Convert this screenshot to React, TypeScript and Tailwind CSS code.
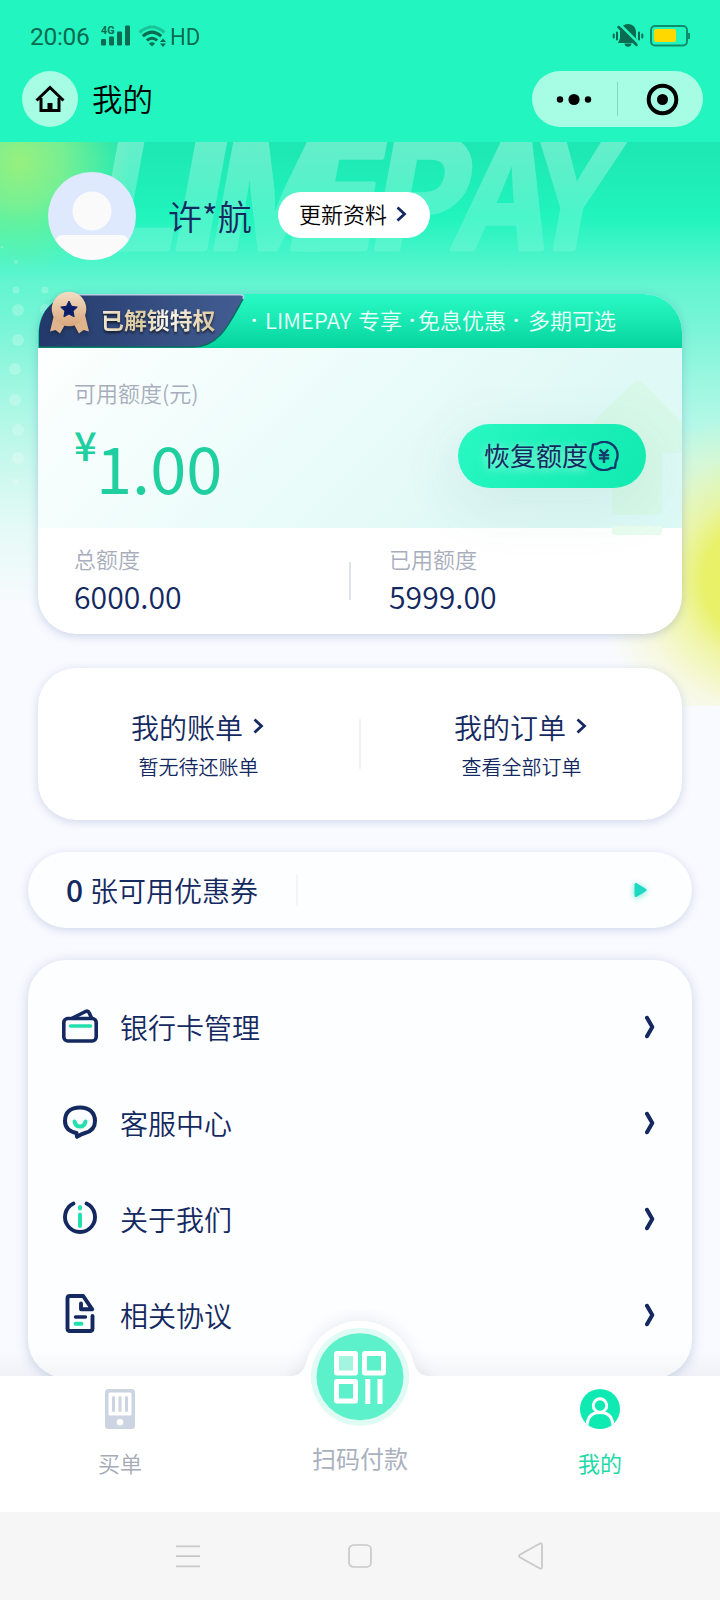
import React from 'react';
import clsx from 'clsx';

const NAVY = '#14295f';
const MINT = '#25dfae';

const dots = [
  { x: 2, y: 105, r: 1.5 },
  { x: 16, y: 120, r: 2 },
  { x: 16, y: 148, r: 3.5 },
  { x: 45, y: 148, r: 3.5 },
  { x: 18, y: 168, r: 6 },
  { x: 46, y: 168, r: 6 },
  { x: 18, y: 198, r: 6 },
  { x: 15, y: 227, r: 6 },
  { x: 15, y: 258, r: 6 },
  { x: 18, y: 288, r: 6 },
  { x: 18, y: 316, r: 6 },
  { x: 16, y: 340, r: 3 },
];

// letters of the watermark, E shares its stem with the M
const watermark = [
  { ch: 'L', x: 91, w: 82 },
  { ch: 'I', x: 167, w: 49 },
  { ch: 'M', x: 207, w: 122 },
  { ch: 'E', x: 283, w: 90 },
  { ch: 'P', x: 367, w: 94 },
  { ch: 'A', x: 449, w: 96 },
  { ch: 'Y', x: 518, w: 92 },
];

const StatusBar: React.FC = () => (
  <div className="flex h-[71px] items-center justify-between pl-[30px] pr-[30px] font-['Roboto',sans-serif] text-[#0a6b50]">
    <div className="flex h-[28px] items-center">
      <span className="mt-[2px] w-[62px] text-[24.5px] font-[430] leading-7 tracking-[-0.3px]">20:06</span>
      <svg className="ml-[9px]" width="29" height="21" viewBox="0 0 29 21" fill="currentColor">
        <text x="0" y="8.6" fontSize="11" fontWeight="700" textLength="13.5" lengthAdjust="spacingAndGlyphs">4G</text>
        <rect x="0" y="14" width="5" height="6.500" rx="1.2" />
        <rect x="8" y="11.500" width="5" height="9" rx="1.2" />
        <rect x="16" y="6.500" width="5" height="14" rx="1.2" />
        <rect x="24" y="0.5" width="5" height="20" rx="1.2" />
      </svg>
      <svg className="ml-2" width="29" height="24" viewBox="0 0 29 24" fill="none" stroke="currentColor" strokeWidth="3">
        <path d="M1.500 8.500Q14 -2.5 26.500 8.500" opacity=".35" />
        <path d="M4.800 12.200Q14 4 23.200 12.200" />
        <path d="M8.800 16.400Q14 12 19.200 16.400" />
        <path d="M11 19.500Q14 17 17 19.500L14 22.500Z" fill="currentColor" stroke="none" />
        <path d="M25 14.500l3 3.500h-6zM25 23l3-3.500h-6z" fill="currentColor" stroke="none" />
      </svg>
      <span className="ml-[3px] mt-[2px] origin-left scale-x-90 text-[24.5px] font-[430] leading-7">HD</span>
    </div>
    <div className="flex items-center gap-[6px]">
      <svg width="32" height="25" viewBox="0 0 32 25" fill="currentColor">
        <path d="M16 1c5.200 0 8 3.700 8 8v6l2.500 5H6l2-4.500V9c0-4.300 2.800-8 8-8z" />
        <path d="M12.500 20.500h7c0 2-1.500 3.300-3.500 3.300s-3.500-1.300-3.500-3.300z" />
        <path d="M8.500 2L27 20.500" stroke="#22f5c0" strokeWidth="2.500" />
        <path d="M6.500 4L24.500 22" stroke="currentColor" strokeWidth="2.500" strokeLinecap="round" />
        <path d="M1.700 11.500v3M5 9.500v7M27 9.500v7M30.300 11.500v3" stroke="currentColor" strokeWidth="2" strokeLinecap="round" />
      </svg>
      <svg width="40" height="22" viewBox="0 0 40 22">
        <rect x="1" y="1" width="36" height="19.500" rx="4" fill="none" stroke="#0d8f6c" strokeWidth="2" />
        <path d="M38 8h1a1.500 1.500 0 0 1 0 6h-1z" fill="#0d8f6c" />
        <rect x="4" y="4" width="22" height="13" rx="2" fill="#ffd800" />
      </svg>
    </div>
  </div>
);

const NavBar: React.FC = () => (
  <div className="flex h-[71px] items-start justify-between pl-[21.500px] pr-[17px]">
    <div className="flex items-center">
      <div className="flex size-[56px] items-center justify-center rounded-full bg-[#a6fde4]">
        <svg width="30" height="28" viewBox="0 0 30 28" fill="none" stroke="#000" strokeWidth="3">
          <path d="M1.500 15.500L15 2.500l13.500 13" />
          <path d="M6 13v12.500h18V13" />
          <path d="M15 18v7" strokeWidth="5" />
        </svg>
      </div>
      <h1 className="-mt-[3px] ml-[14.500px] text-[30.500px] font-[350] leading-[52px] text-black">我的</h1>
    </div>
    <div className="flex h-[56px] w-[171px] items-center rounded-full bg-[#a6fde4]">
      <svg width="171" height="56" viewBox="0 0 171 56">
        <circle cx="28" cy="28.500" r="3.200" />
        <circle cx="42" cy="28.500" r="5.600" />
        <circle cx="56" cy="28.500" r="3.200" />
        <path d="M85.500 11v34" stroke="#7fd9c0" strokeWidth="1" />
        <circle cx="130.500" cy="28.500" r="13.800" fill="none" stroke="#000" strokeWidth="4" />
        <circle cx="130.500" cy="28.500" r="5.500" />
      </svg>
    </div>
  </div>
);

const Backdrop: React.FC = () => (
  <div className="absolute inset-x-0 top-0 h-[564px] overflow-hidden bg-[linear-gradient(180deg,#1de7b3_0px,#20efba_50px,#21f4be_75px,#62f5d0_140px,#7cf5d8_190px,#a2f7e2_250px,#c8f8ed_320px,#e6faf7_390px,#f9faff_470px)]">
    <div className="absolute -left-[90px] -top-[90px] size-[220px] rounded-full bg-[radial-gradient(closest-side,#97f07e,#8cf08acc_40%,#60f0a000)]" />
    <div className="absolute -right-[215px] top-[268px] size-[340px] rounded-full bg-[radial-gradient(closest-side,#e9f15a_0%,#e9f16a_36%,#ecf383b0_52%,#f1f6a050_76%,#f4f8c000)]" />
    <svg className="absolute inset-0" width="720" height="400" viewBox="0 0 720 400">
      <defs>
        <linearGradient id="fade" gradientUnits="userSpaceOnUse" x1="0" y1="0" x2="0" y2="110">
          <stop offset="0" stopColor="#fff" stopOpacity=".32" />
          <stop offset="1" stopColor="#fff" stopOpacity=".13" />
        </linearGradient>
        <mask id="word" maskUnits="userSpaceOnUse" x="0" y="0" width="720" height="120">
          <rect width="720" height="120" fill="url(#fade)" />
        </mask>
      </defs>
      <g mask="url(#word)">
        <g transform="translate(0 107) skewX(-10.500)" fill="#fff" stroke="#fff" strokeWidth="5" strokeLinejoin="round" fontFamily="Inter" fontWeight="700" fontSize="152">
          {watermark.map((l) => (
            <text key={l.ch} x={l.x} y="0" textLength={l.w} lengthAdjust="spacingAndGlyphs">{l.ch}</text>
          ))}
        </g>
      </g>
      {dots.map((dot) => (
        <circle key={`${dot.x}-${dot.y}`} cx={dot.x} cy={dot.y} r={dot.r} fill="#fff" opacity=".22" />
      ))}
    </svg>
  </div>
);

const SmallChevron: React.FC<{ className?: string }> = ({ className }) => (
  <svg className={className} width="11" height="16" viewBox="0 0 11 16" fill="none" stroke={NAVY} strokeWidth="2.800">
    <path d="M1.500 1.500L8.500 8l-7 6.500" />
  </svg>
);

const Profile: React.FC = () => (
  <div className="flex h-[148px] items-center pl-[48px]">
    <svg width="88" height="88" viewBox="0 0 88 88">
      <clipPath id="avatar"><circle cx="44" cy="44" r="44" /></clipPath>
      <g clipPath="url(#avatar)">
        <rect width="88" height="88" fill="#dee9fd" />
        <circle cx="44" cy="39" r="19.500" fill="#fafafa" />
        <rect x="7" y="63" width="74" height="40" rx="8" fill="#fafafa" />
      </g>
    </svg>
    <span className="-mt-[1px] ml-[32px] w-[84px] whitespace-nowrap text-[34px] font-[350] leading-[44px] text-[#14295f]">许*航</span>
    <button className="-mt-[2px] ml-[26px] flex h-[46px] w-[152px] items-center rounded-full bg-white pl-[21px] text-[22px] font-[350] text-black">
      <span className="-mt-[5px] leading-[40px]">更新资料</span>
      <SmallChevron className="mb-[3px] ml-[9px]" />
    </button>
  </div>
);

const Dot: React.FC<{ className: string }> = ({ className }) => (
  <span className={clsx("w-[6px] text-center font-['Noto_Sans',sans-serif] font-semibold", className)}>·</span>
);

const Ribbon: React.FC = () => (
  <div className="relative flex h-[54px] items-center rounded-tr-[38px] rounded-tl-[38px] bg-[linear-gradient(180deg,#29f9c4,#19e8b3_50%,#05d39d)]">
    <svg className="absolute -top-[6px] left-0 overflow-visible" width="210" height="60" viewBox="0 0 210 60">
      <defs>
        <linearGradient id="plate" x1="0" y1="0" x2="1" y2="0">
          <stop offset="0" stopColor="#22396a" />
          <stop offset="1" stopColor="#435d92" />
        </linearGradient>
        <linearGradient id="medal" x1="0" y1="0" x2="0" y2="1">
          <stop offset="0" stopColor="#f3ddc4" />
          <stop offset="1" stopColor="#d9a67a" />
        </linearGradient>
      </defs>
      <path d="M1 59V46C1 22 17 7 40 7H202q5 0 3 4C192 34 182 59 155 59z" fill="url(#plate)" />
      <path d="M40 6.800H202q5 0 3 4" fill="none" stroke="#b9cfe6" strokeWidth="1.600" />
      <path d="M1 59H155C182 59 192 34 205 11" fill="none" stroke="#0b6b62" strokeWidth="1.400" />
      <g style={{ filter: 'drop-shadow(0 2px 2px rgba(0,0,0,.3))' }}>
        <path d="M16 27L12 43.500l5.500-1.500 4.500 3.500L27 36.500h9l5 9 4.500-3.500 5.500 1.500L47 27z" fill="#e0b48c" />
        <circle cx="31" cy="21" r="17.300" fill="url(#medal)" />
      </g>
      <path d="M31 13l2.600 5.300 5.700.8-4.200 4 1 5.700L31 26l-5.100 2.800 1-5.700-4.200-4 5.700-.8z" fill="#0c1f66" stroke="#0c1f66" strokeWidth="1" strokeLinejoin="round" />
    </svg>
    <span className="relative -mt-[5px] ml-[63px] w-[116px] bg-[linear-gradient(100deg,#f6ecd6,#d9c79c_35%,#fbf8ee_55%,#d8c294)] bg-clip-text text-[22.900px] font-bold leading-[40px] text-transparent drop-shadow-[0_2px_1px_rgba(0,0,0,0.6)]">
      已解锁特权
    </span>
    <p className="-mt-[5px] ml-[34px] flex whitespace-nowrap text-[22px] font-[350] leading-[40px] text-[#eafff9]">
      <Dot className="ml-0" />
      <span className="ml-[8px] w-[93px] tracking-[0.1px]">LIMEPAY</span>
      <span>专享</span>
      <Dot className="ml-[7px]" />
      <span className="ml-[3px]">免息优惠</span>
      <Dot className="ml-[7px]" />
      <span className="ml-[9px]">多期可选</span>
    </p>
  </div>
);

const RestoreButton: React.FC = () => (
  <button className="relative flex h-[64px] w-[188px] items-center rounded-full bg-[linear-gradient(120deg,#2af8c3,#1bf0b9_50%,#12eab0)] pl-[26px] shadow-[0_14px_50px_14px_rgba(60,110,110,0.07)]">
    <span className="-mt-[2px] text-[26px] leading-[56px] text-[#14295f] [text-shadow:0_2px_10px_rgba(255,255,255,0.7)]">恢复额度</span>
    <svg className="ml-[1px]" width="30" height="30" viewBox="0 0 32 32" fill="none" stroke="#123a6b" strokeWidth="2.500">
      <path d="M8 3.500A14.300 14.300 0 0 1 28.500 22.500M24 28.500A14.300 14.300 0 0 1 3.500 9.500" />
      <path d="M8.500 3.200L4.200 3.600l-.7 5.900M23.500 28.800l4.300-.4.700-5.900" strokeLinejoin="round" />
      <path d="M11.500 9l4.500 5 4.500-5M10.500 15h11M10.500 18.500h11M16 14v9.500" />
    </svg>
  </button>
);

const CreditCard: React.FC = () => (
  <section className="relative mx-[38px] rounded-[38px] bg-white shadow-[0_2px_10px_rgba(60,90,160,0.25)]">
    <Ribbon />
    <div className="relative h-[180px] bg-[linear-gradient(135deg,#fdfffe_0%,#effdfb_35%,#dff9f6_75%,#dcf9f6_100%)] pl-[36px] pr-[36px] pt-[27px]">
      <svg className="absolute right-0 top-0" width="100" height="190" viewBox="0 0 100 190">
        <path d="M50 36q6-7 12 0L100 74v31H80v55q0 7-7 7H37q-7 0-7-7V95l-20-13q0-7 4-11z" fill="#d3f8e1" opacity=".6" />
        <rect x="30" y="178" width="50" height="9" rx="2" fill="#e8fdf0" />
      </svg>
      <div className="relative flex items-center justify-between">
        <div>
          <p className="h-[34px] text-[22px] font-[350] leading-[34px] text-[#a8adbc]">可用额度(元)</p>
          <p className="flex h-[100px] items-start text-[#20cfa0]">
            <span className="mt-[5px] w-[22px] text-[40px] font-medium leading-[60px]">¥</span>
            <span className="mt-[10px] text-[65px] leading-[94px]">1.00</span>
          </p>
        </div>
        <div className="mb-[-28px]"><RestoreButton /></div>
      </div>
    </div>
    <div className="flex h-[106px] rounded-b-[38px] pl-[36px] pt-[15px]">
      <div className="w-[275px]">
        <p className="text-[22px] font-[350] leading-[30px] text-[#a8adbc]">总额度</p>
        <p className="text-[30.200px] font-[350] leading-[46px] text-[#14295f]">6000.00</p>
      </div>
      <div className="mt-[19px] h-[38px] w-[2px] bg-[#dfe2ea]" />
      <div className="ml-[38px]">
        <p className="text-[22px] font-[350] leading-[30px] text-[#a8adbc]">已用额度</p>
        <p className="text-[30.200px] font-[350] leading-[46px] text-[#14295f]">5999.00</p>
      </div>
    </div>
  </section>
);

const ShortcutCell: React.FC<{ title: string; hint: string }> = ({ title, hint }) => (
  <div className="flex flex-1 flex-col items-center text-[#14295f]">
    <div className="mr-[2px] flex items-center text-[28px] font-[350] leading-[40px]">
      {title}
      <SmallChevron className="mb-[2px] ml-[10px]" />
    </div>
    <p className="text-[20px] font-[350] leading-[40px]">{hint}</p>
  </div>
);

const Shortcuts: React.FC = () => (
  <section className="mx-[38px] mt-[34px] flex h-[152px] rounded-[38px] bg-white pt-[39px] shadow-[0_2px_10px_rgba(60,90,160,0.22)]">
    <ShortcutCell title="我的账单" hint="暂无待还账单" />
    <div className="mt-[12px] h-[50px] w-[2px] bg-[#f0f1f5]" />
    <ShortcutCell title="我的订单" hint="查看全部订单" />
  </section>
);

const Coupons: React.FC = () => (
  <section className="mx-[28px] mt-[32px] flex h-[76px] items-center rounded-full bg-[#fdfeff] pl-[38px] pr-[44px] text-[#14295f] shadow-[0_2px_10px_rgba(60,90,160,0.22)]">
    <span className="-mt-[2px] text-[30px] font-medium leading-[60px]">0</span>
    <span className="ml-[7px] text-[28px] font-[350] leading-[60px]">张可用优惠券</span>
    <div className="ml-[38px] h-[32px] w-[2px] bg-[#f4f5f9]" />
    <svg className="ml-auto drop-shadow-[0_1px_3px_rgba(31,225,190,0.7)]" width="16" height="16" viewBox="0 0 16 16">
      <path d="M4 2.500v11l9-5.500z" fill="#1fd8c3" stroke="#1fd8c3" strokeWidth="3" strokeLinejoin="round" />
    </svg>
  </section>
);

const CardIcon = () => (
  <svg width="40" height="40" viewBox="0 0 40 40" fill="none" stroke={NAVY} strokeWidth="3.600" strokeLinecap="round" strokeLinejoin="round">
    <rect x="3.800" y="12.500" width="32.400" height="22.500" rx="4" />
    <path d="M12.500 12L25.500 5.500q2.600-1 3.800 1.600l2 4.400" />
    <path d="M10.500 20h20" stroke={MINT} />
  </svg>
);

const ServiceIcon = () => (
  <svg width="40" height="40" viewBox="0 0 40 40" fill="none" stroke={NAVY} strokeWidth="4" strokeLinecap="round" strokeLinejoin="round">
    <path d="M16.500 31C9 29.500 5 25.500 5 19 5 10 11 5.500 20 5.500S35 10.500 35 19c0 6.500-4 10.500-10 12-3 .7-5 2-8 3.800z" />
    <path d="M14.500 19.500q1 5 5.500 5t5.500-5" stroke={MINT} />
  </svg>
);

const AboutIcon = () => (
  <svg width="40" height="40" viewBox="0 0 40 40" fill="none" stroke={NAVY} strokeWidth="3.900" strokeLinecap="round">
    <path d="M13.500 5.500a15 15 0 1 0 13 0" />
    <path d="M20 9v1.500M20 16.500v11.500" stroke={MINT} strokeWidth="4" />
  </svg>
);

const AgreementIcon = () => (
  <svg width="40" height="40" viewBox="0 0 40 40" fill="none" stroke={NAVY} strokeWidth="3.900" strokeLinecap="round" strokeLinejoin="round">
    <path d="M32.500 22v12.500q0 2.500-2.500 2.500h-20q-2.500 0-2.500-2.500V4.500Q7.500 2 10 2h13.200l9 13.300H21V9.500" />
    <path d="M15.500 23h10" strokeWidth="3.400" />
    <path d="M15.500 29.800h6" stroke={MINT} />
  </svg>
);

const menu = [
  { label: '银行卡管理', icon: <CardIcon /> },
  { label: '客服中心', icon: <ServiceIcon /> },
  { label: '关于我们', icon: <AboutIcon /> },
  { label: '相关协议', icon: <AgreementIcon /> },
];

const MenuList: React.FC = () => (
  <section className="mx-[28px] mt-[32px] h-[418px] rounded-[38px] bg-[#fdfeff] pt-[18px] shadow-[0_2px_12px_rgba(60,90,160,0.25)]">
    {menu.map((item) => (
      <div key={item.label} className="flex h-[96px] items-center pl-[32px] pr-[37px]">
        {item.icon}
        <span className="ml-[20px] mt-[1px] text-[28px] font-[350] leading-[60px] text-[#14295f]">{item.label}</span>
        <svg className="ml-auto mt-[1px]" width="10" height="24" viewBox="0 0 10 24" fill="none" stroke={NAVY} strokeWidth="4" strokeLinecap="round" strokeLinejoin="round">
          <path d="M2 2.800l5.300 9.200L2 21.200" />
        </svg>
      </div>
    ))}
  </section>
);

const TabLabel: React.FC<{ text: string; active?: boolean }> = ({ text, active }) => (
  <span className={clsx('mt-[15px] text-[22px] leading-[36px]', active ? 'text-[#1fd9a8]' : 'font-[350] text-[#a5abb8]')}>{text}</span>
);

const TabBar: React.FC = () => (
  <nav className="relative flex h-[136px] bg-white">
    <div className="absolute inset-x-0 -top-[26px] h-[26px] bg-gradient-to-b from-transparent to-[#8088a014]" />
    {/* raised notch behind the scan button */}
    <svg className="absolute -top-[66px] left-[280px]" width="160" height="66" viewBox="0 0 160 66">
      <path d="M12 66c9-1 12-6 14.500-14.500a55.500 55.500 0 0 1 107 0c2.500 8.500 5.500 13.500 14.500 14.500v20H12z" fill="#fff" className="drop-shadow-[0_-3px_8px_rgba(100,110,140,0.12)]" />
    </svg>
    <svg className="absolute -top-[66px] left-[280px]" width="160" height="120" viewBox="0 0 160 120">
      <circle cx="80" cy="66.800" r="49" fill="#e0fbf4" />
      <circle cx="80" cy="66.800" r="43.500" fill="#5df1cb" />
      <g fill="none" stroke="#fff" strokeWidth="5">
        <rect x="56.500" y="43.500" width="19" height="19.500" fill="#a4f5df" rx=".5" />
        <rect x="84.500" y="43.500" width="19" height="19.500" rx=".5" />
        <rect x="56.500" y="71.500" width="19" height="19.500" rx=".5" />
        <path d="M87.800 69v25M100 69v25" />
      </g>
    </svg>
    <div className="flex flex-1 flex-col items-center pt-[13px]">
      <svg width="30" height="40" viewBox="0 0 30 40">
        <rect width="30" height="40" rx="3.500" fill="#cdd4e1" />
        <rect x="3.500" y="3.500" width="23" height="23" rx="1.500" fill="#fff" />
        <path d="M8.500 8.500v13M15 8.500v13M21.500 8.500v13" stroke="#cdd4e1" strokeWidth="3" strokeLinecap="round" />
        <circle cx="15" cy="33.200" r="3.300" fill="#fff" />
      </svg>
      <TabLabel text="买单" />
    </div>
    <div className="flex flex-1 flex-col items-center pt-[64px]">
      <span className="text-[24px] leading-[36px] text-[#a9b0be]">扫码付款</span>
    </div>
    <div className="flex flex-1 flex-col items-center pt-[13px]">
      <svg width="40" height="40" viewBox="0 0 40 40">
        <clipPath id="me"><circle cx="20" cy="20" r="20" /></clipPath>
        <circle cx="20" cy="20" r="20" fill="#0fe9b2" />
        <g fill="none" stroke="#fff" strokeWidth="3" clipPath="url(#me)">
          <circle cx="20" cy="16.500" r="6.700" />
          <path d="M7 38q0-14.500 13-14.500T33 38" />
        </g>
      </svg>
      <TabLabel text="我的" active />
    </div>
  </nav>
);

const SystemBar: React.FC = () => (
  <div className="flex h-[88px] items-center bg-[#f6f6f6]">
    <svg className="ml-[176px]" width="24" height="24" viewBox="0 0 24 24" stroke="#c9c9c9" strokeWidth="1.700">
      <path d="M0 2.300h24M0 12.200h24M0 22.300h24" />
    </svg>
    <svg className="ml-[148px]" width="24" height="24" viewBox="0 0 24 24" fill="none" stroke="#c9c9c9" strokeWidth="1.700">
      <rect x="1" y="1" width="22" height="22" rx="4.500" />
    </svg>
    <svg className="ml-[146px]" width="26" height="28" viewBox="0 0 26 28" fill="none" stroke="#c9c9c9" strokeWidth="1.800" strokeLinejoin="round">
      <path d="M1.800 12.800L21.500 1.700q2.500-.9 2.500 1.500v21.600q0 2.400-2.500 1.500L1.800 15.200q-1.600-1.200 0-2.400z" />
    </svg>
  </div>
);

const App: React.FC = () => {
  return (
    <div className="flex h-[1600px] w-[720px] flex-col overflow-hidden bg-[#f9faff] font-['Noto_Sans_CJK_SC',sans-serif]">
      <header className="h-[142px] bg-[#22f5c0]">
        <StatusBar />
        <NavBar />
      </header>
      <main className="relative h-[1234px] overflow-hidden">
        <Backdrop />
        <div className="relative">
          <Profile />
          <div className="pt-[4px]">
            <CreditCard />
          </div>
          <Shortcuts />
          <Coupons />
          <MenuList />
        </div>
      </main>
      <TabBar />
      <SystemBar />
    </div>
  );
};

export default App;
